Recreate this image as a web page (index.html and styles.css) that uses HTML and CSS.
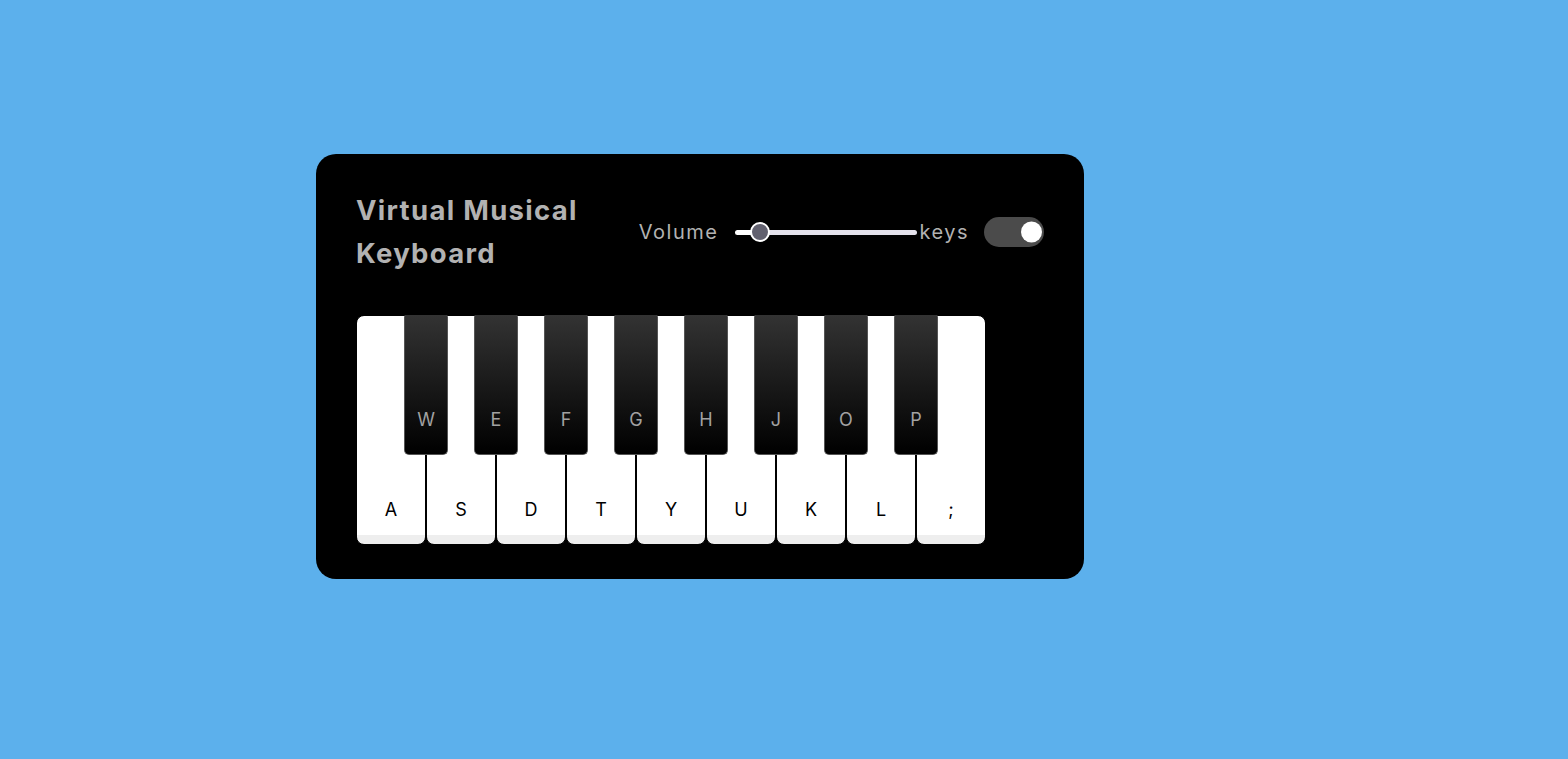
FILE: index.html
```html
<!DOCTYPE html>
<html lang="en">
<head>
<meta charset="utf-8">
<title>Virtual Musical Keyboard</title>
<link rel="stylesheet" href="styles.css">
</head>
<body>
<div class="wrapper">
  <header class="header">
    <h2 class="title">Virtual Musical Keyboard</h2>
    <div class="controls">
      <div class="column volume">
        <span class="label">Volume</span>
        <input class="slider" type="range" min="0" max="1" step="any" value="0.093">
      </div>
      <div class="column keys-toggle">
        <span class="label">keys</span>
        <span class="switch"><span class="knob"></span></span>
      </div>
    </div>
  </header>
  <ul class="piano">
    <li class="key white"><span>a</span></li>
    <li class="key black"><span>w</span></li>
    <li class="key white"><span>s</span></li>
    <li class="key black"><span>e</span></li>
    <li class="key white"><span>d</span></li>
    <li class="key black"><span>f</span></li>
    <li class="key white"><span>t</span></li>
    <li class="key black"><span>g</span></li>
    <li class="key white"><span>y</span></li>
    <li class="key black"><span>h</span></li>
    <li class="key white"><span>u</span></li>
    <li class="key black"><span>j</span></li>
    <li class="key white"><span>k</span></li>
    <li class="key black"><span>o</span></li>
    <li class="key white"><span>l</span></li>
    <li class="key black"><span>p</span></li>
    <li class="key white"><span>;</span></li>
  </ul>
</div>
</body>
</html>
```
FILE: styles.css
```css
* {
  margin: 0;
  padding: 0;
  box-sizing: border-box;
}
html, body {
  height: 100%;
}
body {
  background: #5cb0ec;
  font-family: "Inter", "Open Sans", sans-serif;
  padding: 154px 0 0 316px;
}
.wrapper {
  width: 768px;
  height: 425px;
  background: #000;
  border-radius: 20px;
  padding: 35px 40px;
}
.header {
  display: flex;
  align-items: center;
  justify-content: space-between;
  color: #b2b2b2;
}
.title {
  flex: 0 0 260px;
  font-size: 27.5px;
  font-weight: 700;
  line-height: 43px;
  letter-spacing: 1.3px;
}
.controls {
  display: flex;
  align-items: center;
}
.column {
  display: flex;
  align-items: center;
}
.label {
  font-size: 20px;
  font-weight: 400;
  letter-spacing: 1.5px;
  margin-right: 15px;
}
.slider {
  -webkit-appearance: none;
  appearance: none;
  width: 182px;
  height: 5px;
  margin: 0 2px;
  border-radius: 3px;
  outline: none;
  background: linear-gradient(to right, #fff 0 25px, #e4e2ec 25px);
}
.slider::-webkit-slider-thumb {
  -webkit-appearance: none;
  appearance: none;
  width: 20px;
  height: 20px;
  border-radius: 50%;
  background: #62616f;
  border: 2px solid #fff;
}
.switch {
  position: relative;
  display: block;
  width: 60px;
  height: 30px;
  border-radius: 30px;
  background: #4b4b4b;
}
.knob {
  position: absolute;
  top: 50%;
  left: 37px;
  width: 21px;
  height: 21px;
  border-radius: 50%;
  background: #fff;
  transform: translateY(-50%);
}
.piano {
  display: flex;
  list-style: none;
  margin-top: 40px;
}
.key {
  position: relative;
  list-style: none;
  text-transform: uppercase;
}
.key span {
  position: absolute;
  width: 100%;
  text-align: center;
  font-size: 18px;
  line-height: 24px;
}
.white {
  width: 70px;
  height: 230px;
  border: 1px solid #000;
  border-radius: 8px;
  background: linear-gradient(#fff 96%, #eee 96%);
}
.white span {
  bottom: 22px;
  color: #000;
}
.black {
  z-index: 2;
  width: 44px;
  height: 140px;
  margin: 0 -22px;
  border: 1px solid #555;
  border-top: 0;
  border-radius: 2px 2px 5px 5px;
  background: linear-gradient(#333, #000);
}
.black span {
  bottom: 22px;
  color: #a2a2a2;
}
```
